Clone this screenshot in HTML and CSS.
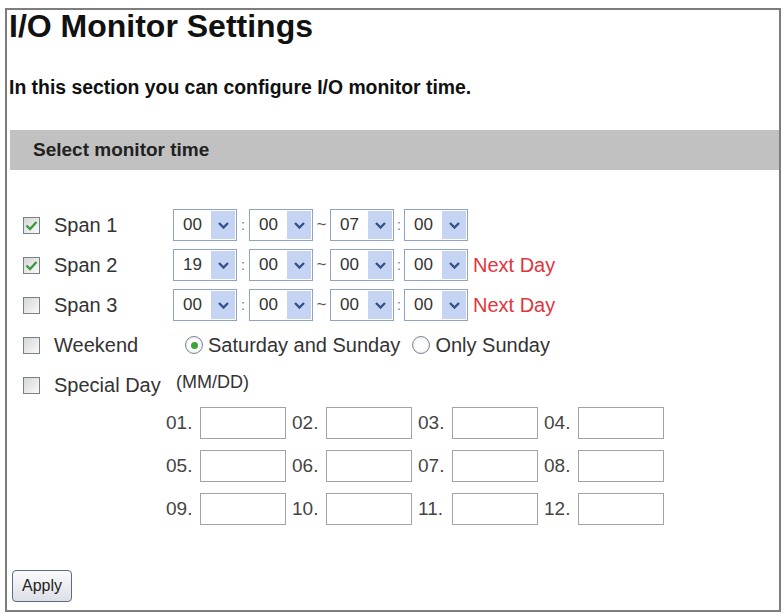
FILE: index.html
```html
<!DOCTYPE html>
<html lang="en">
<head>
    <meta charset="UTF-8">
    <title>I/O Monitor Settings</title>
    <link rel="stylesheet" href="styles.css">
</head>
<body>
<div class="frame">
    <h1 class="title">I/O Monitor Settings</h1>
    <p class="intro">In this section you can configure I/O monitor time.</p>
    <div class="bar">Select monitor time</div>

    <div class="rows">
        <!-- span 1 -->
        <div class="row">
            <div class="opt"><span class="cb"><svg width="13" height="11" viewBox="0 0 13 11"><path d="M1.5 5.5 L5 9 L11.5 2" fill="none" stroke="#3d9a3d" stroke-width="2.4"/></svg></span>Span 1</div>
            <div class="times">
                <span class="sel"><span class="sel-val">00</span><span class="sel-btn"><svg width="11" height="7" viewBox="0 0 11 7"><path d="M1 1 L5.5 5.5 L10 1" fill="none" stroke="#34528a" stroke-width="2.4"/></svg></span></span>
                <span class="sep">:</span>
                <span class="sel"><span class="sel-val">00</span><span class="sel-btn"><svg width="11" height="7" viewBox="0 0 11 7"><path d="M1 1 L5.5 5.5 L10 1" fill="none" stroke="#34528a" stroke-width="2.4"/></svg></span></span>
                <span class="sep tilde">~</span>
                <span class="sel"><span class="sel-val">07</span><span class="sel-btn"><svg width="11" height="7" viewBox="0 0 11 7"><path d="M1 1 L5.5 5.5 L10 1" fill="none" stroke="#34528a" stroke-width="2.4"/></svg></span></span>
                <span class="sep last">:</span>
                <span class="sel"><span class="sel-val">00</span><span class="sel-btn"><svg width="11" height="7" viewBox="0 0 11 7"><path d="M1 1 L5.5 5.5 L10 1" fill="none" stroke="#34528a" stroke-width="2.4"/></svg></span></span>
            </div>
        </div>
        <!-- span 2 -->
        <div class="row">
            <div class="opt"><span class="cb"><svg width="13" height="11" viewBox="0 0 13 11"><path d="M1.5 5.5 L5 9 L11.5 2" fill="none" stroke="#3d9a3d" stroke-width="2.4"/></svg></span>Span 2</div>
            <div class="times">
                <span class="sel"><span class="sel-val">19</span><span class="sel-btn"><svg width="11" height="7" viewBox="0 0 11 7"><path d="M1 1 L5.5 5.5 L10 1" fill="none" stroke="#34528a" stroke-width="2.4"/></svg></span></span>
                <span class="sep">:</span>
                <span class="sel"><span class="sel-val">00</span><span class="sel-btn"><svg width="11" height="7" viewBox="0 0 11 7"><path d="M1 1 L5.5 5.5 L10 1" fill="none" stroke="#34528a" stroke-width="2.4"/></svg></span></span>
                <span class="sep tilde">~</span>
                <span class="sel"><span class="sel-val">00</span><span class="sel-btn"><svg width="11" height="7" viewBox="0 0 11 7"><path d="M1 1 L5.5 5.5 L10 1" fill="none" stroke="#34528a" stroke-width="2.4"/></svg></span></span>
                <span class="sep last">:</span>
                <span class="sel"><span class="sel-val">00</span><span class="sel-btn"><svg width="11" height="7" viewBox="0 0 11 7"><path d="M1 1 L5.5 5.5 L10 1" fill="none" stroke="#34528a" stroke-width="2.4"/></svg></span></span>
                <span class="next">Next Day</span>
            </div>
        </div>
        <!-- span 3 -->
        <div class="row">
            <div class="opt"><span class="cb"></span>Span 3</div>
            <div class="times">
                <span class="sel"><span class="sel-val">00</span><span class="sel-btn"><svg width="11" height="7" viewBox="0 0 11 7"><path d="M1 1 L5.5 5.5 L10 1" fill="none" stroke="#34528a" stroke-width="2.4"/></svg></span></span>
                <span class="sep">:</span>
                <span class="sel"><span class="sel-val">00</span><span class="sel-btn"><svg width="11" height="7" viewBox="0 0 11 7"><path d="M1 1 L5.5 5.5 L10 1" fill="none" stroke="#34528a" stroke-width="2.4"/></svg></span></span>
                <span class="sep tilde">~</span>
                <span class="sel"><span class="sel-val">00</span><span class="sel-btn"><svg width="11" height="7" viewBox="0 0 11 7"><path d="M1 1 L5.5 5.5 L10 1" fill="none" stroke="#34528a" stroke-width="2.4"/></svg></span></span>
                <span class="sep last">:</span>
                <span class="sel"><span class="sel-val">00</span><span class="sel-btn"><svg width="11" height="7" viewBox="0 0 11 7"><path d="M1 1 L5.5 5.5 L10 1" fill="none" stroke="#34528a" stroke-width="2.4"/></svg></span></span>
                <span class="next">Next Day</span>
            </div>
        </div>
        <!-- weekend -->
        <div class="row">
            <div class="opt"><span class="cb"></span>Weekend</div>
            <div class="times radios">
                <span class="radio on"><span class="dot"></span></span>
                <span class="radio-label">Saturday and Sunday</span>
                <span class="radio"></span>
                <span class="radio-label">Only Sunday</span>
            </div>
        </div>
        <!-- special day -->
        <div class="row">
            <div class="opt"><span class="cb"></span>Special Day</div>
            <div class="times"><span class="fmt">(MM/DD)</span></div>
        </div>
    </div>

    <div class="days">
        <div class="day"><span class="day-no">01.</span><span class="day-box"></span></div>
        <div class="day"><span class="day-no">02.</span><span class="day-box"></span></div>
        <div class="day"><span class="day-no">03.</span><span class="day-box"></span></div>
        <div class="day"><span class="day-no">04.</span><span class="day-box"></span></div>
        <div class="day"><span class="day-no">05.</span><span class="day-box"></span></div>
        <div class="day"><span class="day-no">06.</span><span class="day-box"></span></div>
        <div class="day"><span class="day-no">07.</span><span class="day-box"></span></div>
        <div class="day"><span class="day-no">08.</span><span class="day-box"></span></div>
        <div class="day"><span class="day-no">09.</span><span class="day-box"></span></div>
        <div class="day"><span class="day-no">10.</span><span class="day-box"></span></div>
        <div class="day"><span class="day-no">11.</span><span class="day-box"></span></div>
        <div class="day"><span class="day-no">12.</span><span class="day-box"></span></div>
    </div>

    <button class="btn">Apply</button>
</div>
</body>
</html>
```

FILE: styles.css
```css
body {
    margin: 0;
    background: #ffffff;
    font-family: "Liberation Sans", Arial, sans-serif;
    color: #333333;
}

.frame {
    margin: 8px 0 0 5px;
    width: 772px;
    border: 2px solid #7d7d7d;
    padding-bottom: 8px;
}

.title {
    margin: 0 0 0 2px;
    font-size: 32px;
    line-height: 32px;
    font-weight: bold;
    color: #111111;
}

.intro {
    margin: 33px 0 0 2px;
    font-size: 19.4px;
    line-height: 24px;
    font-weight: bold;
    color: #111111;
}

.bar {
    margin: 31px 0 0 3px;
    height: 40px;
    line-height: 40px;
    padding-left: 23px;
    background-color: #c1c1c1;
    font-size: 19px;
    font-weight: bold;
    color: #222222;
}

.rows {
    padding-top: 35px;
}

.row {
    display: flex;
    align-items: center;
    height: 40px;
}

.opt {
    display: flex;
    align-items: center;
    width: 150px;
    padding-left: 16px;
    font-size: 20px;
}

.cb {
    display: inline-flex;
    align-items: center;
    justify-content: center;
    width: 15px;
    height: 15px;
    margin-right: 14px;
    border: 1px solid #76818d;
    background: linear-gradient(135deg, #d6d6d6, #fafafa);
}

.times {
    display: flex;
    align-items: center;
}

.sel {
    display: inline-flex;
    width: 64px;
    height: 32px;
    box-sizing: border-box;
    border: 1px solid #8ea4c2;
    background: #ffffff;
}

.sel-val {
    flex: 1;
    padding-left: 9px;
    line-height: 30px;
    font-size: 17px;
    color: #333333;
}

.sel-btn {
    display: flex;
    align-items: center;
    justify-content: center;
    width: 24px;
    margin: 1px;
    background-color: #c4d4f2;
}

.sep {
    width: 12px;
    text-align: center;
    font-size: 14px;
    color: #777777;
}

.sep.tilde {
    width: 17px;
    font-size: 17px;
    color: #555555;
}

.sep.last {
    width: 10px;
}

.next {
    margin-left: 5px;
    font-size: 20px;
    color: #e4343d;
}

.radios {
    margin-left: 12px;
    font-size: 20px;
}

.radio {
    display: inline-flex;
    align-items: center;
    justify-content: center;
    width: 16px;
    height: 16px;
    border: 1px solid #7a8594;
    border-radius: 50%;
    background: radial-gradient(circle, #ffffff 40%, #e2e2e2 100%);
}

.radio .dot {
    width: 7px;
    height: 7px;
    border-radius: 50%;
    background-color: #3aa43a;
}

.radio-label {
    margin: 0 12px 0 5px;
}

.fmt {
    margin: 0 0 6px 3px;
    font-size: 18px;
}

.days {
    display: grid;
    grid-template-columns: repeat(4, 120px);
    column-gap: 6px;
    row-gap: 11px;
    margin: 2px 0 0 159px;
}

.day {
    display: flex;
    align-items: center;
}

.day-no {
    width: 34px;
    font-size: 19px;
    color: #444444;
}

.day-box {
    width: 86px;
    height: 32px;
    box-sizing: border-box;
    border: 1px solid #a3a3a3;
}

.btn {
    display: block;
    margin: 45px 0 0 5px;
    width: 60px;
    height: 32px;
    padding: 0;
    border: 1px solid #5d6b80;
    border-radius: 4px;
    background: linear-gradient(#fbfbfb, #dcdfe6);
    font-family: "Liberation Sans", Arial, sans-serif;
    font-size: 16px;
    color: #222222;
}
```
